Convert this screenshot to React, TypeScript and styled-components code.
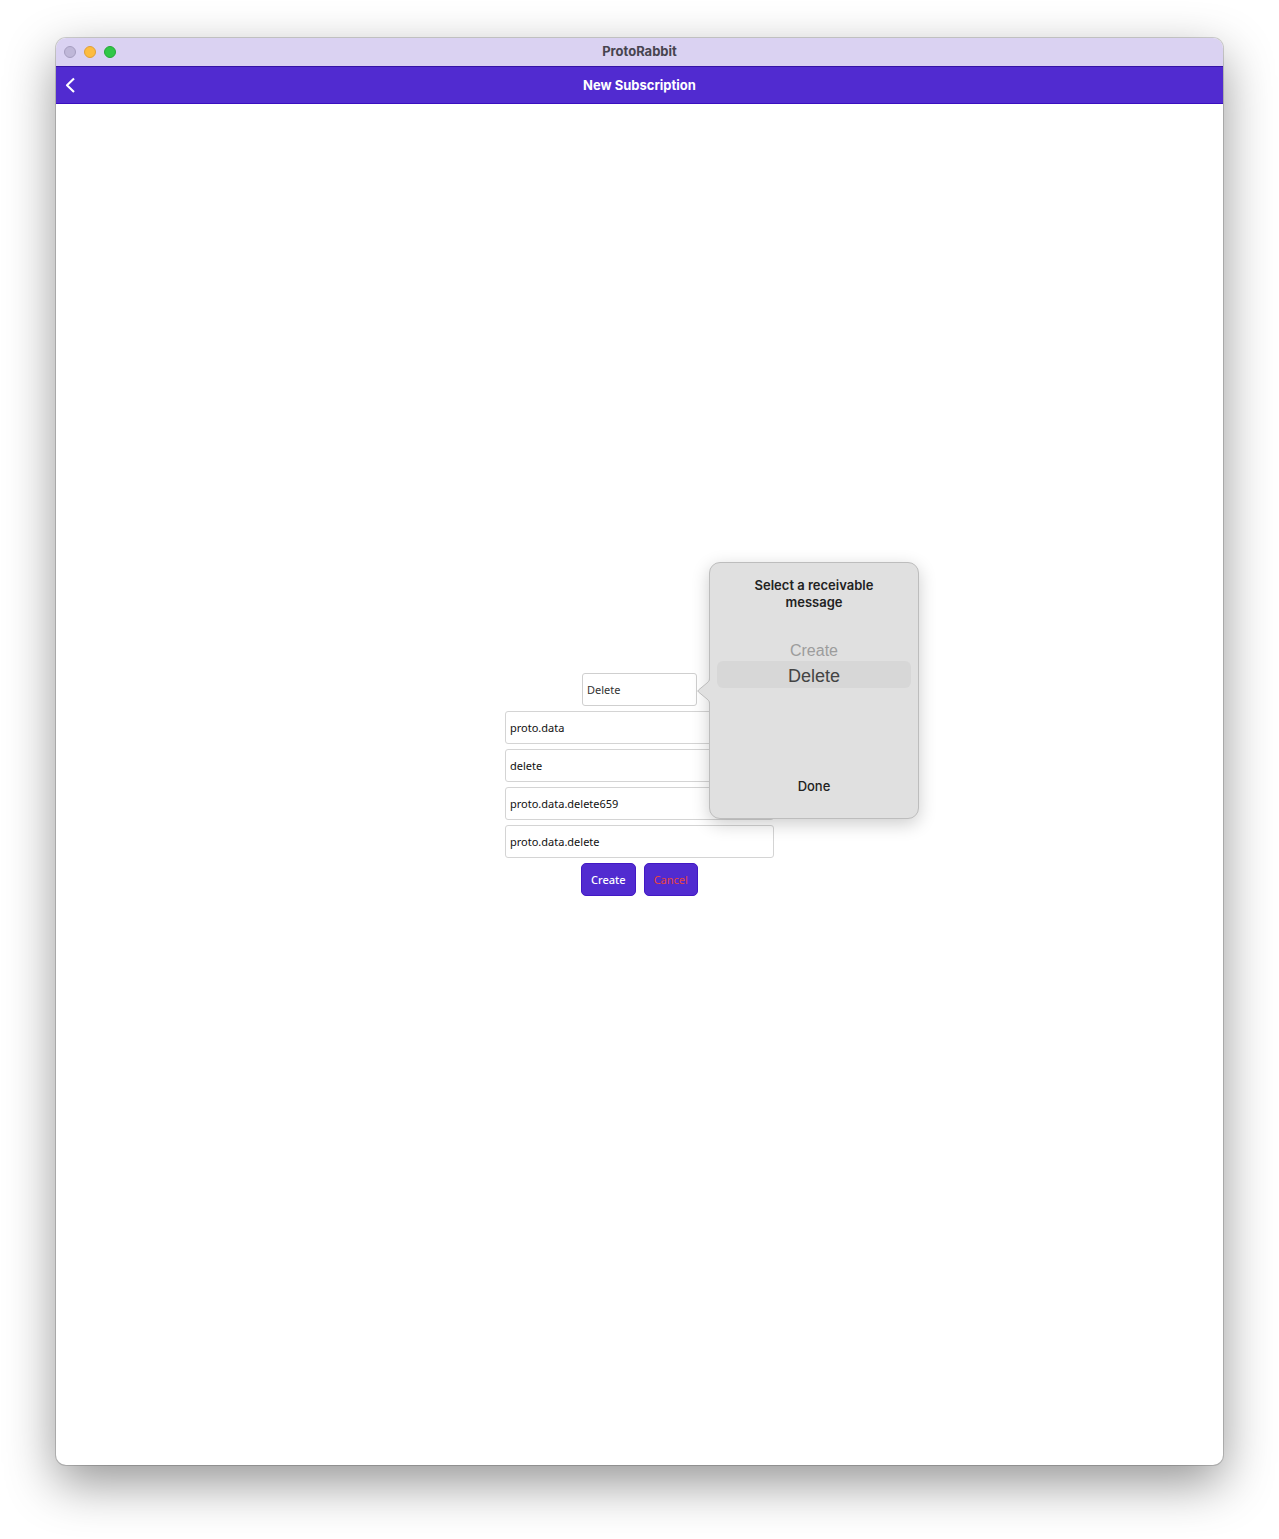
import React, { useState } from "react";
import styled, { createGlobalStyle } from "styled-components";

const GlobalStyle = createGlobalStyle`
  *, *::before, *::after { box-sizing: border-box; }
  body { margin: 0; background: #fff; font-family: Inter, "Liberation Sans", sans-serif; }
  button, input, select { font: inherit; margin: 0; }
`;

const purple = "#512bd0";

const Desktop = styled.div`
  display: flex;
  min-height: 100vh;
  padding: 38px 56px 74px;
`;

const Window = styled.section`
  display: flex;
  flex: 1;
  flex-direction: column;
  border-radius: 10px;
  background: #fff;
  box-shadow: 0 0 0 1px rgba(0, 0, 0, 0.17), 0 18px 50px rgba(0, 0, 0, 0.42);
`;

const TitleBar = styled.header`
  display: grid;
  grid-template-columns: 1fr auto 1fr;
  align-items: center;
  height: 28px;
  padding: 0 8px;
  border-radius: 10px 10px 0 0;
  background: #dad2f2;
`;

const TitleText = styled.h1`
  margin: 0;
  padding-bottom: 2px;
  font-size: 13px;
  line-height: 16px;
  font-weight: 700;
  color: #47444f;
`;

const Lights = styled.div`
  display: flex;
  gap: 8px;
`;

const Light = styled.button<{ $fill: string; $edge: string }>`
  width: 12px;
  height: 12px;
  padding: 0;
  border: 1px solid ${(p) => p.$edge};
  border-radius: 50%;
  background: ${(p) => p.$fill};
`;

const NavBar = styled.nav`
  display: grid;
  grid-template-columns: 1fr auto 1fr;
  align-items: center;
  height: 38px;
  padding: 0 8px;
  border-top: 1px solid #3513a6;
  border-bottom: 1px solid #3a0fc0;
  background: ${purple};
`;

const NavTitle = styled.h2`
  margin: 0;
  font-size: 13px;
  line-height: 16px;
  font-weight: 700;
  color: #fff;
`;

const BackButton = styled.button`
  display: flex;
  justify-self: start;
  padding: 0;
  border: 0;
  background: none;
`;

const Content = styled.main`
  display: flex;
  flex: 1;
  align-items: center;
  justify-content: center;
`;

const Form = styled.form`
  display: flex;
  flex-direction: column;
  align-items: center;
  gap: 5px;
  font-family: "Noto Sans", "Open Sans", sans-serif;
  font-size: 11px;
`;

const PickerAnchor = styled.div`
  position: relative;
  width: 115px;
`;

const Picker = styled.select`
  appearance: none;
  display: block;
  width: 100%;
  height: 33px;
  padding: 0 4px;
  border: 1px solid #cfcfcf;
  border-radius: 3px;
  background: #fff;
  color: #333;
`;

const Entry = styled.input`
  width: 269px;
  height: 33px;
  padding: 0 4px;
  border: 1px solid #d4d4d4;
  border-radius: 3px;
  background: #fff;
  color: #111;
`;

const Actions = styled.div`
  display: flex;
  gap: 8px;
`;

const ActionButton = styled.button<{ $color: string; $strong?: boolean }>`
  height: 33px;
  padding: 0 9px;
  border: 1px solid #4218c4;
  border-radius: 5px;
  background: ${purple};
  color: ${(p) => p.$color};
  font-weight: ${(p) => (p.$strong ? 500 : 400)};
`;

const Popover = styled.div`
  position: absolute;
  z-index: 1;
  top: -111px;
  left: calc(100% + 12px);
  display: flex;
  flex-direction: column;
  align-items: center;
  width: 210px;
  height: 257px;
  padding: 14px 7px 16px;
  border: 1px solid #bdbdbd;
  border-radius: 11px;
  background: #e0e0e0;
  box-shadow: 0 5px 18px rgba(0, 0, 0, 0.2);
  font-family: Inter, "Liberation Sans", sans-serif;
`;

const Arrow = styled.svg`
  position: absolute;
  top: 113px;
  left: -14px;
`;

const PopoverTitle = styled.h3`
  width: 140px;
  margin: 0;
  font-size: 13px;
  line-height: 17px;
  font-weight: 600;
  text-align: center;
  color: #222;
`;

const Wheel = styled.div`
  display: flex;
  flex: 1;
  flex-direction: column;
  align-self: stretch;
  padding-top: 29px;
`;

const WheelItem = styled.button<{ $selected: boolean }>`
  height: ${(p) => (p.$selected ? 27 : 21)}px;
  padding: ${(p) => (p.$selected ? "3px 0 0" : "0")};
  border: 0;
  border-radius: 6px;
  background: ${(p) => (p.$selected ? "#d7d7d7" : "transparent")};
  color: ${(p) => (p.$selected ? "#444" : "#9c9c9c")};
  font-family: "Liberation Sans", sans-serif;
  font-size: ${(p) => (p.$selected ? 18 : 16)}px;
`;

const DoneButton = styled.button`
  padding: 0 8px;
  margin-bottom: 8px;
  border: 0;
  background: none;
  font-size: 13px;
  line-height: 16px;
  font-weight: 500;
  color: #222;
`;

const messages = ["Create", "Delete"];

const initialEntries = [
  { label: "Exchange", value: "proto.data" },
  { label: "Routing key", value: "delete" },
  { label: "Queue", value: "proto.data.delete659" },
  { label: "Name", value: "proto.data.delete" },
];

export default function App() {
  const [message, setMessage] = useState("Delete");
  const [open, setOpen] = useState(true);

  return (
    <>
      <GlobalStyle />
      <Desktop>
        <Window>
          <TitleBar>
            <Lights>
              <Light type="button" aria-label="Close" $fill="#bfb7d8" $edge="#a69ec0" />
              <Light type="button" aria-label="Minimize" $fill="#fdbc40" $edge="#e0a036" />
              <Light type="button" aria-label="Zoom" $fill="#30c748" $edge="#25a837" />
            </Lights>
            <TitleText>ProtoRabbit</TitleText>
          </TitleBar>
          <NavBar>
            <BackButton type="button" aria-label="Back">
              <svg width="12" height="18" viewBox="0 0 12 18" fill="none">
                <path
                  d="M10 2.500 3 9.300l7 6.800"
                  stroke="#fff"
                  strokeWidth="2.1"
                  strokeLinejoin="round"
                />
              </svg>
            </BackButton>
            <NavTitle>New Subscription</NavTitle>
          </NavBar>
          <Content>
            <Form onSubmit={(e) => e.preventDefault()}>
              <PickerAnchor>
                <Picker
                  aria-label="Receivable message"
                  value={message}
                  onChange={(e) => setMessage(e.target.value)}
                >
                  {messages.map((m) => (
                    <option key={m}>{m}</option>
                  ))}
                </Picker>
                {open && (
                  <Popover role="dialog" aria-labelledby="picker-title">
                    <Arrow width="15" height="30" viewBox="0 0 15 30">
                      <path
                        d="M15 1C14 4 13 5.500 11 7L2.500 14Q1 15 2.500 16L11 23C13 24.500 14 26 15 29Z"
                        fill="#e0e0e0"
                      />
                      <path
                        d="M13.500 2C13.500 4 13 5.500 11 7L2.500 14Q1 15 2.500 16L11 23C13 24.500 13.500 26 13.500 28"
                        fill="none"
                        stroke="#bdbdbd"
                      />
                    </Arrow>
                    <PopoverTitle id="picker-title">Select a receivable message</PopoverTitle>
                    <Wheel role="listbox" aria-labelledby="picker-title">
                      {messages.map((m) => (
                        <WheelItem
                          key={m}
                          type="button"
                          role="option"
                          aria-selected={m === message}
                          $selected={m === message}
                          onClick={() => setMessage(m)}
                        >
                          {m}
                        </WheelItem>
                      ))}
                    </Wheel>
                    <DoneButton type="button" onClick={() => setOpen(false)}>
                      Done
                    </DoneButton>
                  </Popover>
                )}
              </PickerAnchor>
              {initialEntries.map((entry) => (
                <Entry
                  key={entry.label}
                  type="text"
                  aria-label={entry.label}
                  defaultValue={entry.value}
                />
              ))}
              <Actions>
                <ActionButton type="submit" $color="#fff" $strong>
                  Create
                </ActionButton>
                <ActionButton type="button" $color="#e8453c">
                  Cancel
                </ActionButton>
              </Actions>
            </Form>
          </Content>
        </Window>
      </Desktop>
    </>
  );
}
